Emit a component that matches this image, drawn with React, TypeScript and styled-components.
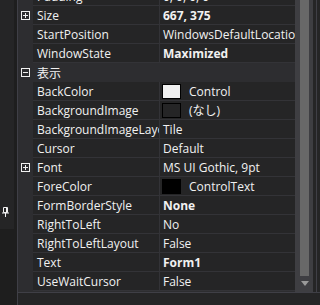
import React from "react";
import styled, { createGlobalStyle } from "styled-components";

const GlobalStyle = createGlobalStyle`
  html, body {
    margin: 0;
    padding: 0;
    background: #1e1e1e;
    overflow: hidden;
  }
  * {
    box-sizing: border-box;
  }
`;

const Window = styled.div`
  display: flex;
  width: 320px;
  height: 305px;
  background: #1e1e1e;
  font-family: "Open Sans", "Noto Sans CJK JP", sans-serif;
  font-size: 12px;
  color: #f1f1f1;
  overflow: hidden;
`;

const SidePanel = styled.div`
  display: flex;
  flex-direction: column;
  width: 14px;
  flex-shrink: 0;
`;

const SideBody = styled.div`
  height: 203px;
  background: #252526;
`;

const PinTab = styled.div`
  display: flex;
  align-items: flex-start;
  justify-content: flex-start;
  height: 26px;
  padding: 4px 0 0 2px;
  background: #252526;
`;

const SideRest = styled.div`
  flex: 1;
  background: #1e1e1e;
`;

const Divider = styled.div`
  width: 4px;
  flex-shrink: 0;
  background: #1e1e1e;
  border-right: 1px solid #3f3f46;
`;

const Main = styled.div`
  display: flex;
  flex-direction: column;
  flex: 1;
  min-width: 0;
`;

const Body = styled.div`
  display: flex;
  height: 292px;
  background: #2d2d30;
`;

const Grid = styled.div`
  width: 277px;
  flex-shrink: 0;
  margin-top: -13px;
`;

const Row = styled.div<{ $category?: boolean }>`
  display: grid;
  grid-template-columns: 15px 127px 135px;
  height: 19px;
  background: ${(p) => (p.$category ? "#2d2d30" : "transparent")};
`;

const Gutter = styled.div`
  display: flex;
  align-items: center;
  justify-content: flex-start;
  padding-left: 3px;
  padding-bottom: 1px;
`;

const Toggle = styled.div`
  position: relative;
  width: 9px;
  height: 9px;
  border: 1px solid #f1f1f1;
`;

const ToggleBar = styled.div<{ $vertical?: boolean }>`
  position: absolute;
  background: #f1f1f1;
  ${(p) =>
    p.$vertical
      ? "left: 3px; top: 1px; width: 1px; height: 5px;"
      : "left: 1px; top: 3px; width: 5px; height: 1px;"}
`;

const Label = styled.div`
  padding: 1px 0 0 4px;
  line-height: 17px;
  white-space: nowrap;
  overflow: hidden;
  background: #252526;
  border-bottom: 1px solid #333337;
  border-right: 1px solid #333337;
`;

const CategoryLabel = styled.div`
  grid-column: 2 / 4;
  padding: 1px 0 0 4px;
  line-height: 17px;
  font-family: "Noto Sans CJK JP", "Open Sans", sans-serif;
  white-space: nowrap;
`;

const Value = styled.div<{ $bold?: boolean }>`
  display: flex;
  align-items: center;
  gap: 8px;
  padding: 1px 0 0 3px;
  line-height: 17px;
  white-space: nowrap;
  overflow: hidden;
  font-weight: ${(p) => (p.$bold ? 700 : 400)};
  font-family: "Open Sans", "Noto Sans CJK JP", sans-serif;
  background: #252526;
  border-bottom: 1px solid #333337;
`;

const Swatch = styled.div<{ $color: string }>`
  width: 19px;
  height: 15px;
  flex-shrink: 0;
  margin-left: -1px;
  margin-top: -1px;
  background: ${(p) => p.$color};
  border: 1px solid #000;
`;

const ScrollTrack = styled.div`
  display: flex;
  flex-direction: column;
  align-items: center;
  width: 18px;
  flex-shrink: 0;
  padding-bottom: 6px;
  background: #3e3e42;
`;

const Thumb = styled.div`
  width: 9px;
  flex: 1;
  margin-left: 1px;
  background: #686868;
`;

const Arrow = styled.div`
  width: 0;
  height: 0;
  margin: 5px 0 0 1px;
  border-left: 4px solid transparent;
  border-right: 4px solid transparent;
  border-top: 5px solid #999999;
`;

const RightEdge = styled.div`
  flex: 1;
  display: flex;
  background: #252526;
  padding-left: 3px;
`;

const EdgeLine = styled.div`
  width: 1px;
  background: #3f3f46;
`;

const Footer = styled.div`
  flex: 1;
  background: #252526;
  border-top: 1px solid #3f3f46;
`;

type Prop = {
  name: string;
  value: string;
  bold?: boolean;
  expand?: boolean;
  swatch?: string;
};

type Item = Prop | { category: string };

const items: Item[] = [
  { name: "Padding", value: "0, 0, 0, 0" },
  { name: "Size", value: "667, 375", bold: true, expand: true },
  { name: "StartPosition", value: "WindowsDefaultLocation" },
  { name: "WindowState", value: "Maximized", bold: true },
  { category: "表示" },
  { name: "BackColor", value: "Control", swatch: "#f0f0f0" },
  { name: "BackgroundImage", value: "(なし)", swatch: "#252526" },
  { name: "BackgroundImageLayout", value: "Tile" },
  { name: "Cursor", value: "Default" },
  { name: "Font", value: "MS UI Gothic, 9pt", expand: true },
  { name: "ForeColor", value: "ControlText", swatch: "#000000" },
  { name: "FormBorderStyle", value: "None", bold: true },
  { name: "RightToLeft", value: "No" },
  { name: "RightToLeftLayout", value: "False" },
  { name: "Text", value: "Form1", bold: true },
  { name: "UseWaitCursor", value: "False" },
];

function PinIcon() {
  return (
    <svg width="7" height="10" viewBox="0 0 7 10">
      <path d="M1.5 0.5h4v5h-4z" fill="none" stroke="#f1f1f1" />
      <path d="M0 6h7" stroke="#f1f1f1" />
      <path d="M3.5 6v4" stroke="#f1f1f1" />
      <path d="M4.5 1v4" stroke="#f1f1f1" />
    </svg>
  );
}

function ToggleBox({ open }: { open: boolean }) {
  return (
    <Toggle>
      <ToggleBar />
      {!open && <ToggleBar $vertical />}
    </Toggle>
  );
}

export default function App() {
  return (
    <>
      <GlobalStyle />
      <Window>
        <SidePanel>
          <SideBody />
          <PinTab>
            <PinIcon />
          </PinTab>
          <SideRest />
        </SidePanel>
        <Divider />
        <Main>
          <Body>
            <Grid>
              {items.map((item) =>
                "category" in item ? (
                  <Row $category key={item.category}>
                    <Gutter>
                      <ToggleBox open />
                    </Gutter>
                    <CategoryLabel>{item.category}</CategoryLabel>
                  </Row>
                ) : (
                  <Row key={item.name}>
                    <Gutter>{item.expand && <ToggleBox open={false} />}</Gutter>
                    <Label>{item.name}</Label>
                    <Value $bold={item.bold}>
                      {item.swatch && <Swatch $color={item.swatch} />}
                      {item.value}
                    </Value>
                  </Row>
                )
              )}
            </Grid>
            <ScrollTrack>
              <Thumb />
              <Arrow />
            </ScrollTrack>
            <RightEdge>
              <EdgeLine />
            </RightEdge>
          </Body>
          <Footer />
        </Main>
      </Window>
    </>
  );
}
